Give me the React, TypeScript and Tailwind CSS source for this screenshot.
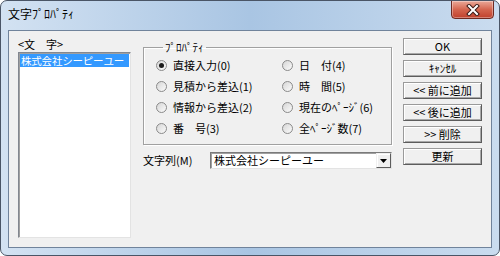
import { FC } from "react";

const jp = "font-['Noto_Sans_CJK_JP','Noto_Sans',sans-serif]";

const Radio: FC<{ checked?: boolean; label: string }> = ({ checked, label }) => (
  <div className="flex items-center h-[21px]">
    <span className="w-[11px] h-[11px] rounded-full border border-[#8a8a8a] bg-linear-to-br from-[#d6d6d6] to-[#fbfbfb] flex items-center justify-center shrink-0">
      {checked && <span className="w-[5px] h-[5px] rounded-full bg-[#1a1a1a]" />}
    </span>
    <span className="ml-[6px] whitespace-nowrap">{label}</span>
  </div>
);

const Btn: FC<{ label: string }> = ({ label }) => (
  <button className="h-[17px] w-full flex items-center justify-center bg-[#f0f0f0] border border-[#9a9a9a] border-r-[#5c5c5c] border-b-[#5c5c5c] shadow-[inset_1px_1px_0_#fff,inset_-1px_-1px_0_#a8a8a8] leading-none">
    {label}
  </button>
);

const App: FC = () => {
  return (
    <div className={`w-[500px] h-[256px] ${jp} text-[11px] text-black`}>
      <div className="w-full h-full flex flex-col rounded-[7px] border border-[#4a5566] bg-linear-to-r from-[#d3e2f2] via-[#a9c5e3] to-[#cadcef] overflow-hidden">
        {/* title bar */}
        <div className="h-[29px] shrink-0 flex items-start justify-between">
          <span className="ml-[7px] mt-[6px] text-[12px] leading-[14px]">文字ﾌﾟﾛﾊﾟﾃｨ</span>
          <div className="mr-[5px] -mt-px w-[43px] h-[19px] rounded-b-[4px] border border-[#6e2a22] bg-linear-to-b from-[#e9a898] via-[#d4654f] to-[#c0402c] flex items-center justify-center shadow-[inset_0_0_0_1px_rgba(255,255,255,0.35)]">
            <svg width="14" height="12" viewBox="0 0 14 12">
              <path d="M3 2 L11 10 M11 2 L3 10" stroke="#3b1a16" strokeWidth="4" strokeLinecap="square" />
              <path d="M3 2 L11 10 M11 2 L3 10" stroke="#fff" strokeWidth="2" strokeLinecap="square" />
            </svg>
          </div>
        </div>

        {/* client area */}
        <div className="mx-[7px] h-[218px] shrink-0 border border-[#70839b] bg-[#f0f0f0] flex pl-[9px] pt-[6px]">
          {/* list */}
          <div className="w-[113px] flex flex-col">
            <p className="leading-[15px] whitespace-pre">{"<文　字>"}</p>
            <div className="h-[186px] bg-white border border-[#828790] border-r-[#e3e3e3] border-b-[#e3e3e3] shadow-[inset_1px_1px_0_#a0a0a0] p-px">
              <div className="bg-[#3399ff] text-white h-[13px] leading-[13px] pl-[1px] text-[10.5px] tracking-[-0.2px] whitespace-nowrap">
                株式会社シーピーユー
              </div>
            </div>
          </div>

          {/* properties */}
          <div className="ml-[12px] w-[249px] flex flex-col">
            <fieldset className="mt-[3px] border border-[#a0a0a0] shadow-[1px_1px_0_#fff,inset_1px_1px_0_#fff] pl-[12px] pt-px pb-[5px] grid grid-cols-[126px_1fr]">
              <legend className="ml-[7px] px-[2px] leading-[14px]">ﾌﾟﾛﾊﾟﾃｨ</legend>
              <div className="flex flex-col">
                <Radio checked label="直接入力(0)" />
                <Radio label="見積から差込(1)" />
                <Radio label="情報から差込(2)" />
                <Radio label="番　号(3)" />
              </div>
              <div className="flex flex-col">
                <Radio label="日　付(4)" />
                <Radio label="時　間(5)" />
                <Radio label="現在のﾍﾟｰｼﾞ(6)" />
                <Radio label="全ﾍﾟｰｼﾞ数(7)" />
              </div>
            </fieldset>

            <div className="mt-[7px] flex items-center">
              <span className="w-[67px]">文字列(M)</span>
              <div className="w-[182px] h-[17px] flex bg-white border border-[#7a7a7a] border-r-[#e3e3e3] border-b-[#e3e3e3] shadow-[inset_1px_1px_0_#a0a0a0]">
                <span className="flex-1 pl-[3px] leading-[15px] whitespace-nowrap">株式会社シーピーユー</span>
                <span className="w-[15px] h-full bg-[#f0f0f0] border border-[#f0f0f0] border-r-[#5c5c5c] border-b-[#5c5c5c] shadow-[inset_1px_1px_0_#fff] flex items-center justify-center">
                  <svg width="7" height="4" viewBox="0 0 7 4">
                    <path d="M0 0 H7 L3.5 4 Z" fill="#000" />
                  </svg>
                </span>
              </div>
            </div>
          </div>

          {/* buttons */}
          <div className="ml-[11px] mt-px w-[79px] flex flex-col gap-[5px]">
            <Btn label="OK" />
            <Btn label="ｷｬﾝｾﾙ" />
            <Btn label="<< 前に追加" />
            <Btn label="<< 後に追加" />
            <Btn label=">> 削除" />
            <Btn label="更新" />
          </div>
        </div>
      </div>
    </div>
  );
};

export default App;
